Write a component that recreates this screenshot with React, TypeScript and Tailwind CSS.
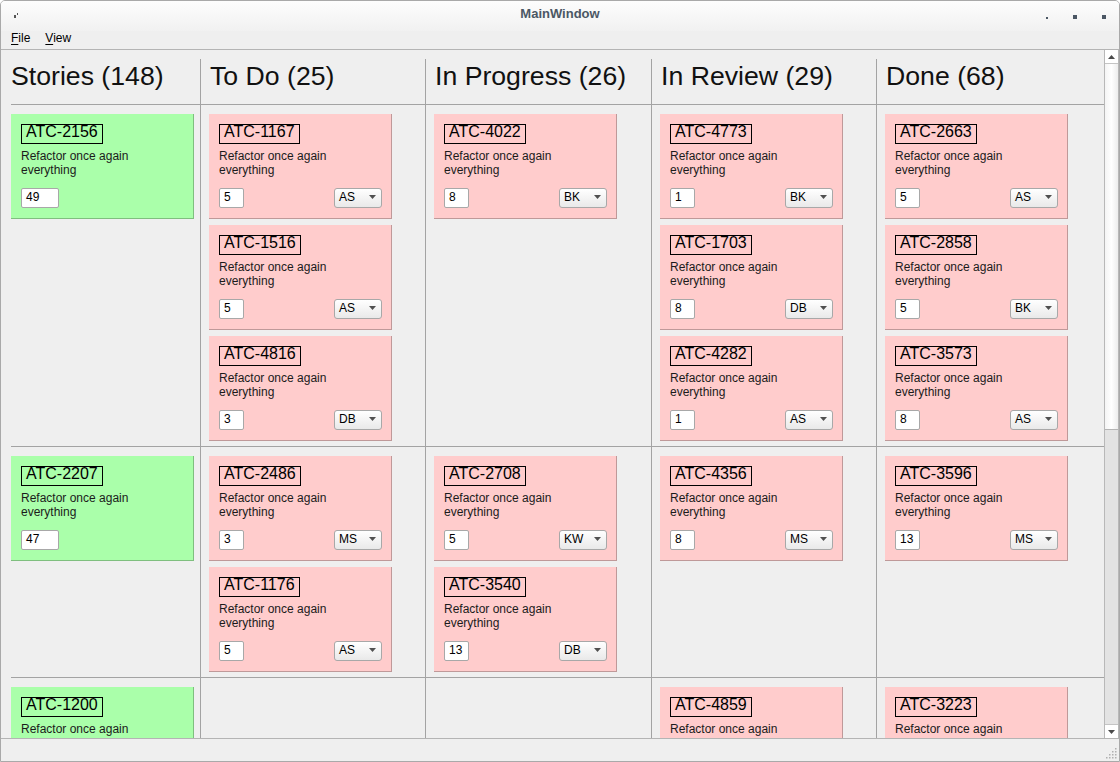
type Task = { id: string; points: string; owner: string };
type Row = { story: { id: string; points: string }; cols: Task[][] };

const headers = ["Stories (148)", "To Do (25)", "In Progress (26)", "In Review (29)", "Done (68)"];
const widths = ["w-[189px]", "w-[225px]", "w-[226px]", "w-[225px]", "w-[219px]"];

const rows: Row[] = [
  {
    story: { id: "ATC-2156", points: "49" },
    cols: [
      [
        { id: "ATC-1167", points: "5", owner: "AS" },
        { id: "ATC-1516", points: "5", owner: "AS" },
        { id: "ATC-4816", points: "3", owner: "DB" },
      ],
      [{ id: "ATC-4022", points: "8", owner: "BK" }],
      [
        { id: "ATC-4773", points: "1", owner: "BK" },
        { id: "ATC-1703", points: "8", owner: "DB" },
        { id: "ATC-4282", points: "1", owner: "AS" },
      ],
      [
        { id: "ATC-2663", points: "5", owner: "AS" },
        { id: "ATC-2858", points: "5", owner: "BK" },
        { id: "ATC-3573", points: "8", owner: "AS" },
      ],
    ],
  },
  {
    story: { id: "ATC-2207", points: "47" },
    cols: [
      [
        { id: "ATC-2486", points: "3", owner: "MS" },
        { id: "ATC-1176", points: "5", owner: "AS" },
      ],
      [
        { id: "ATC-2708", points: "5", owner: "KW" },
        { id: "ATC-3540", points: "13", owner: "DB" },
      ],
      [{ id: "ATC-4356", points: "8", owner: "MS" }],
      [{ id: "ATC-3596", points: "13", owner: "MS" }],
    ],
  },
  {
    story: { id: "ATC-1200", points: "21" },
    cols: [
      [],
      [],
      [{ id: "ATC-4859", points: "3", owner: "KW" }],
      [{ id: "ATC-3223", points: "5", owner: "DB" }],
    ],
  },
];

function CardTop({ id }: { id: string }) {
  return (
    <>
      <div className="self-start border border-black px-[4px] pb-[4px] text-[16px] leading-[14px] text-black">{id}</div>
      <div className="mt-[5px] text-[12px] leading-[14px] text-[#1b1b1b]">
        Refactor once again
        <br />
        everything
      </div>
    </>
  );
}

function NumberBox({ value, wide }: { value: string; wide?: boolean }) {
  return (
    <div
      className={`h-[20px] ${wide ? "w-[38px]" : "w-[25px]"} rounded-[2px] border border-[#a8a8a8] bg-white pl-[4px] text-[12px] leading-[16px] text-black`}
    >
      {value}
    </div>
  );
}

function StoryCard({ id, points }: { id: string; points: string }) {
  return (
    <div className="flex h-[105px] w-[183px] flex-col border-r border-b border-r-black/25 border-b-black/25 bg-[#aaffaa] pt-[10px] pl-[10px]">
      <CardTop id={id} />
      <div className="mt-[11px]">
        <NumberBox value={points} wide />
      </div>
    </div>
  );
}

function TaskCard({ task }: { task: Task }) {
  return (
    <div className="flex h-[105px] w-[183px] flex-col border-r border-b border-r-black/25 border-b-black/25 bg-[#ffcccc] pt-[10px] pr-[9px] pl-[10px]">
      <CardTop id={task.id} />
      <div className="mt-[11px] flex items-start justify-between">
        <NumberBox value={task.points} />
        <div className="flex h-[20px] w-[48px] items-start justify-between rounded-[3px] border border-[#a8a8a8] bg-gradient-to-b from-white to-[#e9e9e9] pr-[5px] pl-[4px] text-[12px] leading-[16px] text-black">
          <span>{task.owner}</span>
          <svg width="7" height="4" viewBox="0 0 7 4" className="mt-[6px]">
            <path d="M0 0h7L3.5 4z" fill="#505050" />
          </svg>
        </div>
      </div>
    </div>
  );
}

export default function App() {
  return (
    <div
      className="flex h-[762px] w-[1120px] flex-col overflow-hidden rounded-t-[5px] border border-[#a9a9a9] bg-[#efefef] text-black"
      style={{ fontFamily: '"Liberation Sans", Arial, sans-serif' }}
    >
      {/* title bar */}
      <div className="grid h-[30px] flex-none grid-cols-[1fr_auto_1fr] bg-gradient-to-b from-[#fdfdfd] to-[#f1f1f1]">
        <div className="pt-[12px] pl-[13px]">
          <svg width="5" height="5" viewBox="0 0 5 5">
            <path d="M0 2h2v3H0zM3 0h1v2H3z" fill="#555" />
          </svg>
        </div>
        <div className="pt-[6px] text-[13px] leading-[13px] font-bold text-[#4b5764]">MainWindow</div>
        <div className="flex items-start justify-end gap-[25px] pt-[14px] pr-[13px]">
          <div className="mt-[2px] h-[2px] w-[2px] bg-[#4b5764]" />
          <div className="h-[4px] w-[4px] bg-[#4b5764]" />
          <div className="h-[4px] w-[4px] bg-[#4b5764]" />
        </div>
      </div>

      {/* menu bar */}
      <div className="flex h-[19px] flex-none items-start gap-[15px] border-b border-[#b4b4b4] pt-[1px] pl-[10px] text-[12px] leading-[12px]">
        <span>
          <span className="underline underline-offset-2">F</span>ile
        </span>
        <span>
          <span className="underline underline-offset-2">V</span>iew
        </span>
      </div>

      <div className="flex h-[688px] flex-none">
        <div className="flex-1 overflow-hidden pt-[9px] pl-[10px]">
          <div className="flex h-[46px] border-b border-[#a3a3a3]">
            {headers.map((h, i) => (
              <div
                key={h}
                className={`${widths[i]} ${i > 0 ? "border-l border-[#a3a3a3] pl-[9px]" : ""} pt-[3px] text-[26.67px] leading-[28px] whitespace-nowrap text-[#111]`}
              >
                {h}
              </div>
            ))}
          </div>

          {rows.map((row) => (
            <div key={row.story.id} className="flex border-b border-[#a3a3a3]">
              <div className={`${widths[0]} pt-[9px] pb-[5px]`}>
                <StoryCard id={row.story.id} points={row.story.points} />
              </div>
              {row.cols.map((tasks, i) => (
                <div
                  key={i}
                  className={`${widths[i + 1]} flex flex-col gap-[6px] border-l border-[#a3a3a3] pt-[9px] pb-[5px] pl-[8px]`}
                >
                  {tasks.map((t) => (
                    <TaskCard key={t.id} task={t} />
                  ))}
                </div>
              ))}
            </div>
          ))}
        </div>

        {/* vertical scrollbar */}
        <div className="flex w-[15px] flex-none flex-col border-r border-l border-[#b8b8b8]">
          <div className="flex h-[14px] items-center justify-center border-b border-[#c4c4c4] bg-white">
            <svg width="7" height="4" viewBox="0 0 7 4">
              <path d="M3.5 0L7 4H0z" fill="#4a4a4a" />
            </svg>
          </div>
          <div className="h-[366px] border-b border-[#b4b4b4] bg-gradient-to-r from-[#f4f4f4] via-white to-[#ededed]" />
          <div className="flex-1 bg-[#e3e3e3]" />
          <div className="flex h-[14px] items-center justify-center border-t border-[#c4c4c4] bg-white">
            <svg width="7" height="4" viewBox="0 0 7 4">
              <path d="M0 0h7L3.5 4z" fill="#4a4a4a" />
            </svg>
          </div>
        </div>
      </div>

      {/* status bar */}
      <div className="flex h-[23px] flex-none items-end justify-end border-t border-[#b4b4b4] pr-[2px] pb-[2px]">
        <svg width="11" height="11" viewBox="0 0 11 11">
          {[
            [9, 0],
            [6, 3],
            [9, 3],
            [3, 6],
            [6, 6],
            [9, 6],
            [0, 9],
            [3, 9],
            [6, 9],
            [9, 9],
          ].map(([x, y]) => (
            <rect key={`${x}-${y}`} x={x} y={y} width="1.5" height="1.5" fill="#b0b0b0" />
          ))}
        </svg>
      </div>
    </div>
  );
}
